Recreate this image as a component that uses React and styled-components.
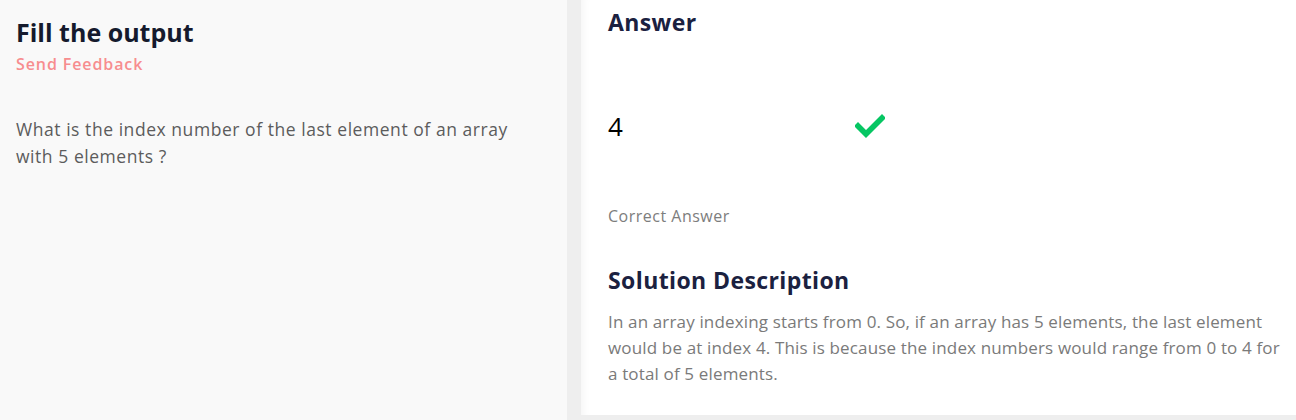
import React from "react";
import styled, { createGlobalStyle } from "styled-components";

const Global = createGlobalStyle`
  html, body { margin: 0; padding: 0; background: #eeeeee; }
  body { font-family: "Open Sans", "Lato", sans-serif; }
  * { box-sizing: border-box; }
`;

const Page = styled.div`
  display: flex;
  gap: 14px;
  height: 420px;
  align-items: flex-start;
`;

const QuestionPanel = styled.section`
  width: 567px;
  height: 420px;
  flex-shrink: 0;
  background: #f9f9f9;
  padding: 16px 16px;
`;

const AnswerPanel = styled.section`
  flex: 1;
  height: 415px;
  background: #ffffff;
  padding: 6px 16px 0 27px;
  box-shadow: inset 12px 0 12px -12px rgba(0, 0, 0, 0.06);
`;

const Title = styled.h1`
  margin: 0;
  font-size: 25px;
  line-height: 32px;
  font-weight: 700;
  color: #151a2d;
`;

const FeedbackLink = styled.a`
  display: block;
  margin-top: 5px;
  font-size: 16px;
  line-height: 22px;
  font-weight: 600;
  letter-spacing: 0.9px;
  color: #f78d8f;
  cursor: pointer;
`;

const Question = styled.p`
  margin: 41px 0 0;
  width: 510px;
  font-size: 17.5px;
  line-height: 27px;
  letter-spacing: 0.55px;
  color: #5c5c5c;
`;

const Heading = styled.h2`
  margin: 0;
  font-size: 23px;
  line-height: 32px;
  font-weight: 700;
  letter-spacing: 0.4px;
  color: #1b2140;
`;

const AnswerRow = styled.div`
  display: flex;
  align-items: center;
  margin-top: 68px;
  height: 40px;
`;

const AnswerValue = styled.span`
  width: 247px;
  font-size: 26px;
  color: #000;
`;

const Check = () => (
  <svg width="30" height="24" viewBox="0 0 30 24">
    <path d="M3 12 L11 20 L27 4" fill="none" stroke="#06c663" strokeWidth="5.5" strokeLinecap="square" />
  </svg>
);

const Caption = styled.div`
  margin-top: 60px;
  font-size: 16px;
  line-height: 20px;
  letter-spacing: 0.5px;
  color: #7d7d7d;
`;

const SolutionHeading = styled(Heading)`
  margin-top: 38px;
`;

const Description = styled.p`
  margin: 13px 0 0;
  font-size: 17px;
  line-height: 26px;
  letter-spacing: 0.15px;
  color: #7a7a7a;
  max-width: 672px;
`;

export default function App() {
  return (
    <>
      <Global />
      <Page>
        <QuestionPanel>
          <Title>Fill the output</Title>
          <FeedbackLink>Send Feedback</FeedbackLink>
          <Question>
            What is the index number of the last element of an array with 5 elements ?
          </Question>
        </QuestionPanel>
        <AnswerPanel>
          <Heading>Answer</Heading>
          <AnswerRow>
            <AnswerValue>4</AnswerValue>
            <Check />
          </AnswerRow>
          <Caption>Correct Answer</Caption>
          <SolutionHeading>Solution Description</SolutionHeading>
          <Description>
            In an array indexing starts from 0. So, if an array has 5 elements, the last element would be at index 4. This is because the index numbers would range from 0 to 4 for a total of 5 elements.
          </Description>
        </AnswerPanel>
      </Page>
    </>
  );
}
